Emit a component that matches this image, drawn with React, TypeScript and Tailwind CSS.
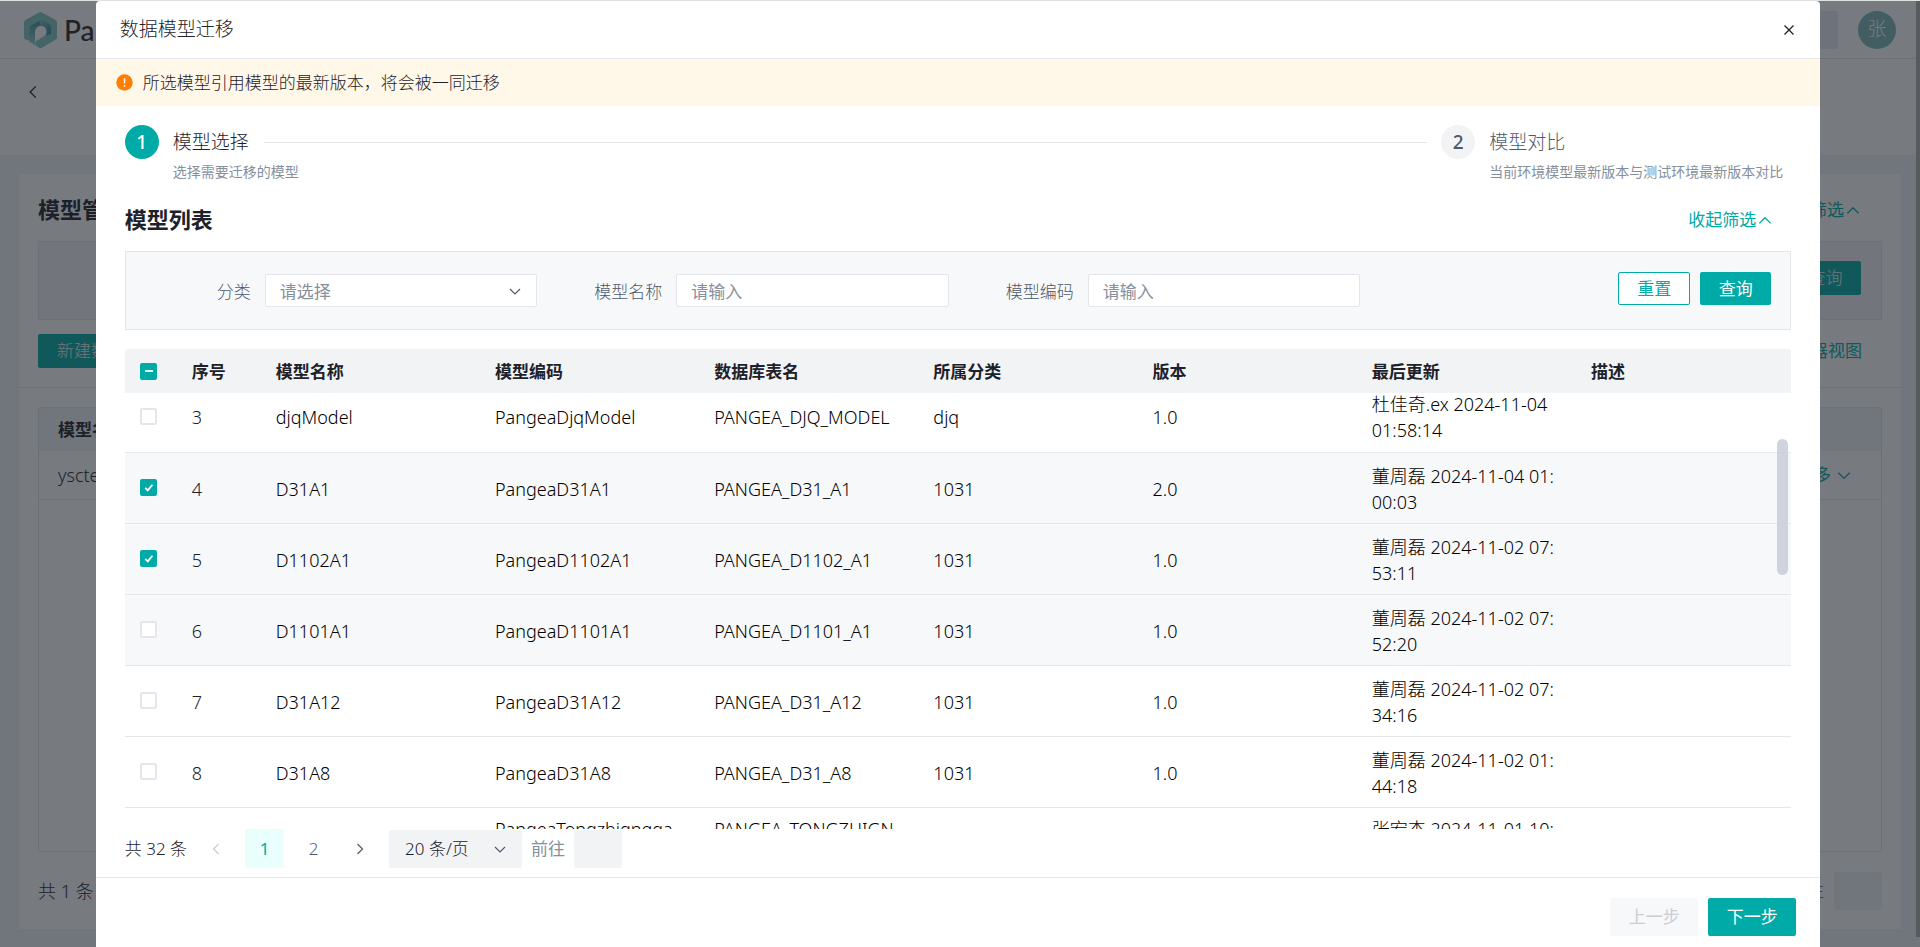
import React from 'react';

interface ModelRow {
  id: number;
  name: string;
  code: string;
  table: string;
  category: string;
  version: string;
  updated: [string, string];
  checked?: boolean;
  shaded?: boolean;
}

const rows: ModelRow[] = [
  { id: 3, name: 'djqModel', code: 'PangeaDjqModel', table: 'PANGEA_DJQ_MODEL', category: 'djq', version: '1.0', updated: ['杜佳奇.ex 2024-11-04', '01:58:14'] },
  { id: 4, name: 'D31A1', code: 'PangeaD31A1', table: 'PANGEA_D31_A1', category: '1031', version: '2.0', updated: ['董周磊 2024-11-04 01:', '00:03'], checked: true, shaded: true },
  { id: 5, name: 'D1102A1', code: 'PangeaD1102A1', table: 'PANGEA_D1102_A1', category: '1031', version: '1.0', updated: ['董周磊 2024-11-02 07:', '53:11'], checked: true, shaded: true },
  { id: 6, name: 'D1101A1', code: 'PangeaD1101A1', table: 'PANGEA_D1101_A1', category: '1031', version: '1.0', updated: ['董周磊 2024-11-02 07:', '52:20'], shaded: true },
  { id: 7, name: 'D31A12', code: 'PangeaD31A12', table: 'PANGEA_D31_A12', category: '1031', version: '1.0', updated: ['董周磊 2024-11-02 07:', '34:16'] },
  { id: 8, name: 'D31A8', code: 'PangeaD31A8', table: 'PANGEA_D31_A8', category: '1031', version: '1.0', updated: ['董周磊 2024-11-02 01:', '44:18'] },
];

const columns = ['模型名称', '模型编码', '数据库表名', '所属分类', '版本', '最后更新', '描述'];

const Chevron: React.FC<{ dir: 'up' | 'down' | 'left' | 'right'; className?: string }> = ({ dir, className }) => {
  const d = {
    up: 'M3 11 L8 6 L13 11',
    down: 'M3 6 L8 11 L13 6',
    left: 'M10.500 3 L5.500 8 L10.500 13',
    right: 'M5.500 3 L10.500 8 L5.500 13',
  }[dir];
  return (
    <svg viewBox="0 0 16 16" fill="none" stroke="currentColor" strokeWidth="1.2" className={className}>
      <path d={d} />
    </svg>
  );
};

const Logo: React.FC = () => (
  <svg viewBox="0 0 34 36" className="w-[34px] h-9">
    <defs>
      <linearGradient id="leg" x1="0" y1="0" x2="0" y2="1">
        <stop offset="0" stopColor="#3f8f9c" />
        <stop offset="1" stopColor="#8ed3cf" />
      </linearGradient>
      <linearGradient id="fold" x1="0" y1="0" x2="1" y2="1">
        <stop offset="0" stopColor="#7cc4c4" />
        <stop offset="1" stopColor="#2f7f90" />
      </linearGradient>
    </defs>
    <path d="M15 0.500 Q16.500 -0.300 18 0.500 L31.500 8 Q33 9 33 10.500 V25 Q33 26.800 31.500 27.600 L18 35.400 Q16.500 36.200 15 35.400 L11 33 V30 L1.500 27.600 Q0 26.800 0 25 V10.500 Q0 9 1.500 8 Z" fill="#82c8c5" />
    <path d="M5.500 30 V16.500 Q5.500 14.500 7.500 13.300 L15 9 Q16.500 8.200 18 9 L25 13 L22.500 20 C22.500 16 20.500 14 17 14 C13 14 11 17 11 21 V33 Z" fill="url(#leg)" />
    <path d="M16.500 8.200 Q18 8 20 9 L25 12 Q27 13.200 27 15 V22 Q27 24 25 25.200 L22 27 V20 C22.500 16 20.500 14 17 14 L15 9 Z" fill="url(#fold)" />
    <path d="M11 33 V21 C11 16.500 13.500 14 17 14 C20.500 14 22.500 16.500 22.500 19.500 C22.500 23 20 25 16 26.500 V35.500 Z" fill="#fff" />
    <path d="M16 27 L22 23.500 L27 22 L33 17 V25 Q33 26.800 31.500 27.600 L18 35.400 Q16.500 36.200 15 35.400 L11.500 33.300 V30 Q12 28.500 16 27 Z" fill="#82c8c5" />
  </svg>
);

const Checkbox: React.FC<{ label: string; checked?: boolean; mixed?: boolean }> = ({ label, checked, mixed }) => (
  <span className="relative block w-[17px] h-[17px]">
    <input
      type="checkbox"
      aria-label={label}
      defaultChecked={checked || mixed}
      className="peer block w-[17px] h-[17px] appearance-none rounded-[2px] border-2 border-[#e5e6eb] bg-white checked:border-[#00aaa6] checked:bg-[#00aaa6]"
    />
    <svg viewBox="0 0 17 17" fill="none" stroke="#fff" strokeWidth="1.8" className="pointer-events-none absolute inset-0 hidden peer-checked:block">
      <path d={mixed ? 'M5 8 H13' : 'M5.200 8.800 L7.800 11.400 L12.400 5.800'} />
    </svg>
  </span>
);

const Field: React.FC<{ id: string; label: string; children: React.ReactNode }> = ({ id, label, children }) => (
  <div className="flex items-center">
    <label htmlFor={id} className="w-[139px] pr-[14px] pt-0.5 text-right text-[#4e5969]">
      {label}
    </label>
    <div className="relative flex-1">{children}</div>
  </div>
);

const Background: React.FC = () => (
  <div className="flex h-screen flex-col bg-[#f0f2f7] pt-px">
    {/* Top bar */}
    <header className="flex h-[58px] shrink-0 items-center justify-between border-b border-[#e5e6eb] bg-white px-6">
      <div className="flex items-center gap-[6px]">
        <Logo />
        <span className="font-['Lato'] text-[28px] font-medium leading-none text-[#222]">Pa</span>
      </div>
      <div className="flex items-center gap-5">
        <div className="flex h-[38px] w-[140px] items-center justify-end rounded-[2px] bg-[#e8eaf3] pr-4">
          <Chevron dir="down" className="h-4 w-4" />
        </div>
        <div className="flex h-[38px] w-[38px] items-center justify-center rounded-full bg-[#7bb8b8] text-[19px] text-white">张</div>
      </div>
    </header>
    <div className="h-24 shrink-0 bg-white px-6 pt-6">
      <button aria-label="返回" className="block text-[#1d2129]">
        <Chevron dir="left" className="h-[18px] w-[18px]" />
      </button>
    </div>

    {/* Model management card */}
    <section className="mx-[19px] mb-[18px] mt-[19px] flex flex-1 flex-col bg-white">
      <div className="flex h-[67px] items-center justify-between pl-[19px] pr-[39px] pt-1">
        <h2 className="text-[22px] font-bold">模型管理</h2>
        <button className="flex items-center font-normal text-[#00aaa6]">
          收起筛选
          <Chevron dir="up" className="h-[18px] w-[18px]" />
        </button>
      </div>
      <div className="mx-[19px] flex h-[79px] items-start justify-end border border-[#e5e6eb] bg-[#f2f3f7] pr-5 pt-[19px]">
        <button className="h-[34px] w-[71px] rounded-[2px] bg-[#00aaa6] text-[#f0f2f7]">查询</button>
      </div>
      <div className="flex h-[68px] items-start justify-between border-b border-[#e5e6eb] pl-[19px] pr-[39px] pt-[14px]">
        <button className="h-[34px] rounded-[2px] bg-[#00aaa6] px-[19px] text-[#f0f2f7]">新建数据模型</button>
        <button className="h-[34px] font-normal text-[#00aaa6]">切换至浏览器视图</button>
      </div>
      <div className="mx-[19px] mt-[19px] flex-1 rounded-[2px] border border-[#e5e6eb]">
        <table className="w-full">
          <thead>
            <tr className="h-[43px] bg-[#f0f2f7] text-left">
              <th className="pl-[19px]">模型名称</th>
              <th></th>
            </tr>
          </thead>
          <tbody>
            <tr className="h-12 border-b border-[#e5e6eb]">
              <td className="pl-[19px] text-lg">ysctest</td>
              <td className="pr-7">
                <button className="ml-auto flex items-center gap-1 font-normal text-[#00aaa6]">
                  更多
                  <Chevron dir="down" className="h-[18px] w-[18px]" />
                </button>
              </td>
            </tr>
          </tbody>
        </table>
      </div>
      <div className="flex h-[77px] items-center justify-between px-[19px]">
        <span className="text-lg">共 1 条</span>
        <label className="flex items-center gap-[10px] text-[#4e5969]">
          前往
          <input className="h-[38px] w-12 rounded-[2px] bg-[#f0f2f7]" />
        </label>
      </div>
    </section>
  </div>
);

const ModelTable: React.FC = () => (
  <div className="relative mt-[19px]">
    <table className="w-full table-fixed text-left text-[17px]">
      <colgroup>
        <col className="w-12" />
        <col className="w-[84px]" />
      </colgroup>
      <thead>
        <tr className="h-11 bg-[#f2f3f5]">
          <th className="rounded-tl-[3px] pl-[15px]">
            <Checkbox label="全选" mixed />
          </th>
          <th className="pl-[19px] pt-0.5">序号</th>
          {columns.map((c) => (
            <th key={c} className="pl-[19px] pt-0.5 last:rounded-tr-[3px]">{c}</th>
          ))}
        </tr>
      </thead>
    </table>
    <div className="h-[436px] overflow-hidden">
      <table className="-mt-3 w-full table-fixed text-left text-lg leading-[26px] text-black">
        <colgroup>
          <col className="w-12" />
          <col className="w-[84px]" />
        </colgroup>
        <tbody>
          {rows.map((r) => (
            <tr key={r.id} className={r.shaded ? 'h-[71px] border-b border-[#e5e6eb] bg-[#f7f8fa]' : 'h-[71px] border-b border-[#e5e6eb]'}>
              <td className="pl-[15px]">
                <Checkbox label={r.name} checked={r.checked} />
              </td>
              <td className="pl-[19px] pt-0.5 text-[#1d2129]">{r.id}</td>
              <td className="pl-[19px] pt-0.5">{r.name}</td>
              <td className="pl-[19px] pt-0.5">{r.code}</td>
              <td className="pl-[19px] pt-0.5">{r.table}</td>
              <td className="pl-[19px] pt-0.5">{r.category}</td>
              <td className="pl-[19px] pt-0.5">{r.version}</td>
              <td className="whitespace-nowrap pl-[19px] pt-0.5">
                {r.updated[0]}
                <br />
                {r.updated[1]}
              </td>
              <td></td>
            </tr>
          ))}
          {/* Row 9 is only partly scrolled into view */}
          <tr className="h-[71px] align-top">
            <td colSpan={3}></td>
            <td className="pl-[19px] pt-2">PangeaTongzhignqga</td>
            <td className="pl-[19px] pt-2">PANGEA_TONGZHIGN</td>
            <td colSpan={2}></td>
            <td className="whitespace-nowrap pl-[19px] pt-2">张宏杰 2024-11-01 10:</td>
            <td></td>
          </tr>
        </tbody>
      </table>
    </div>
    {/* Scroll thumb */}
    <div className="absolute right-[3px] top-[90px] h-[136px] w-[11px] rounded-full bg-[#c9cdd8]/85" />
  </div>
);

const inputClass =
  'block h-[33px] w-full appearance-none rounded-[2px] border border-[#e5e6eb] bg-white px-[14px] pt-0.5 font-normal text-[#86909c] placeholder:text-[#86909c] outline-none';

const MigrationModal: React.FC = () => (
  <div role="dialog" aria-label="数据模型迁移" className="w-[90%] rounded-t-[4px] bg-white">
    <div className="flex h-[58px] items-center justify-between border-b border-[#e5e6eb] pl-6 pr-[23px]">
      <h1 className="text-[19px]">数据模型迁移</h1>
      <button aria-label="关闭" className="text-[#1d2129]">
        <svg viewBox="0 0 16 16" fill="none" stroke="currentColor" strokeWidth="1.3" className="h-4 w-4">
          <path d="M3.500 3.500 L12.500 12.500 M12.500 3.500 L3.500 12.500" />
        </svg>
      </button>
    </div>

    <div className="flex h-[47px] items-center gap-[10px] bg-[#fff7e8] pl-5">
      <svg viewBox="0 0 18 18" className="h-[17px] w-[17px]">
        <circle cx="9" cy="9" r="8.700" fill="#ff7d00" />
        <path d="M9 4.500 V10 M9 11.600 V13.400" stroke="#fff" strokeWidth="1.7" />
      </svg>
      <span>所选模型引用模型的最新版本，将会被一同迁移</span>
    </div>

    <div className="px-[29px]">
      {/* Steps */}
      <div className="flex items-start pt-[19px]">
        <div className="flex h-[34px] w-[34px] items-center justify-center rounded-full bg-[#00aaa6] text-[19px] font-medium text-white">1</div>
        <div className="ml-[14px] h-[59px] min-w-[130px]">
          <div className="text-[19px] leading-[34px]">模型选择</div>
          <div className="text-[14px] font-normal leading-[26px] text-[#86909c]">选择需要迁移的模型</div>
        </div>
        <div className="-ml-[39px] mr-[14px] mt-[17px] h-px flex-1 bg-[#e5e6eb]" />
        <div className="flex h-[34px] w-[34px] items-center justify-center rounded-full bg-[#f2f3f5] text-[19px] font-medium text-[#4e5969]">2</div>
        <div className="ml-[14px] h-[59px] min-w-[302px]">
          <div className="text-[19px] leading-[34px] text-[#4e5969]">模型对比</div>
          <div className="text-[14px] font-normal leading-[26px] text-[#86909c]">当前环境模型最新版本与测试环境最新版本对比</div>
        </div>
      </div>

      <div className="flex h-[67px] items-center justify-between pr-[17px] pt-1">
        <h2 className="text-[22px] font-bold">模型列表</h2>
        <button className="flex items-center font-normal text-[#00aaa6]">
          收起筛选
          <Chevron dir="up" className="h-[18px] w-[18px]" />
        </button>
      </div>

      {/* Filters */}
      <form className="flex h-[79px] items-center border border-[#e5e6eb] bg-[#f7f8fa]">
        <div className="grid flex-1 grid-cols-3">
          <Field id="category" label="分类">
            <select id="category" className={inputClass}>
              <option>请选择</option>
            </select>
            <Chevron dir="down" className="pointer-events-none absolute right-[14px] top-[9px] h-4 w-4 text-[#4e5969]" />
          </Field>
          <Field id="name" label="模型名称">
            <input id="name" placeholder="请输入" className={inputClass} />
          </Field>
          <Field id="code" label="模型编码">
            <input id="code" placeholder="请输入" className={inputClass} />
          </Field>
        </div>
        <div className="flex w-[430px] justify-end gap-[10px] pb-1 pr-[19px]">
          <button type="reset" className="h-[33px] w-[72px] rounded-[2px] border border-[#00aaa6] bg-white font-normal text-[#00aaa6]">重置</button>
          <button type="button" className="h-[33px] w-[71px] rounded-[2px] bg-[#00aaa6] font-normal text-white">查询</button>
        </div>
      </form>

      <ModelTable />

      {/* Pagination */}
      <nav className="flex h-12 items-start">
        <div className="flex h-[39px] items-center">
          <span className="mr-[21px]">共 32 条</span>
          <button aria-label="上一页" disabled className="text-[#c9cdd4]">
            <Chevron dir="left" className="h-4 w-4" />
          </button>
          <button className="ml-[21px] h-[39px] w-[39px] rounded-[2px] bg-[#e8fffb] font-normal text-[#00aaa6]">1</button>
          <button className="ml-[10px] h-[39px] w-[39px] text-[#4e5969]">2</button>
          <button aria-label="下一页" className="ml-[19px] text-[#4e5969]">
            <Chevron dir="right" className="h-4 w-4" />
          </button>
          <div className="relative ml-[21px]">
            <select aria-label="每页条数" className="block h-[38px] w-[133px] appearance-none rounded-[2px] bg-[#f2f3f5] pl-4">
              <option>20 条/页</option>
            </select>
            <Chevron dir="down" className="pointer-events-none absolute right-[14px] top-[11px] h-4 w-4 text-[#4e5969]" />
          </div>
          <label className="ml-[9px] flex items-center gap-[9px] font-normal text-[#86909c]">
            前往
            <input className="h-[38px] w-12 rounded-[2px] bg-[#f2f3f5]" />
          </label>
        </div>
      </nav>
    </div>

    <footer className="flex justify-end gap-[10px] border-t border-[#e5e6eb] px-6 py-5">
      <button disabled className="h-[38px] w-[88px] rounded-[2px] bg-[#f7f8fa] font-normal text-[#c9cdd4]">上一步</button>
      <button className="h-[38px] w-[88px] rounded-[2px] bg-[#00aaa6] font-normal text-white">下一步</button>
    </footer>
  </div>
);

export default function App() {
  return (
    <div className="relative h-screen overflow-hidden font-['Noto_Sans','Noto_Sans_CJK_SC',sans-serif] text-[17px] font-light text-[#1d2129]">
      <Background />
      <div className="absolute inset-0 flex items-start justify-center border-t border-[#dde3de] bg-[#1d2129]/60 pr-1">
        <MigrationModal />
      </div>
      {/* Page scrollbar */}
      <div className="absolute right-0 top-px h-[936px] w-1 bg-[#565b5e]" />
    </div>
  );
}
